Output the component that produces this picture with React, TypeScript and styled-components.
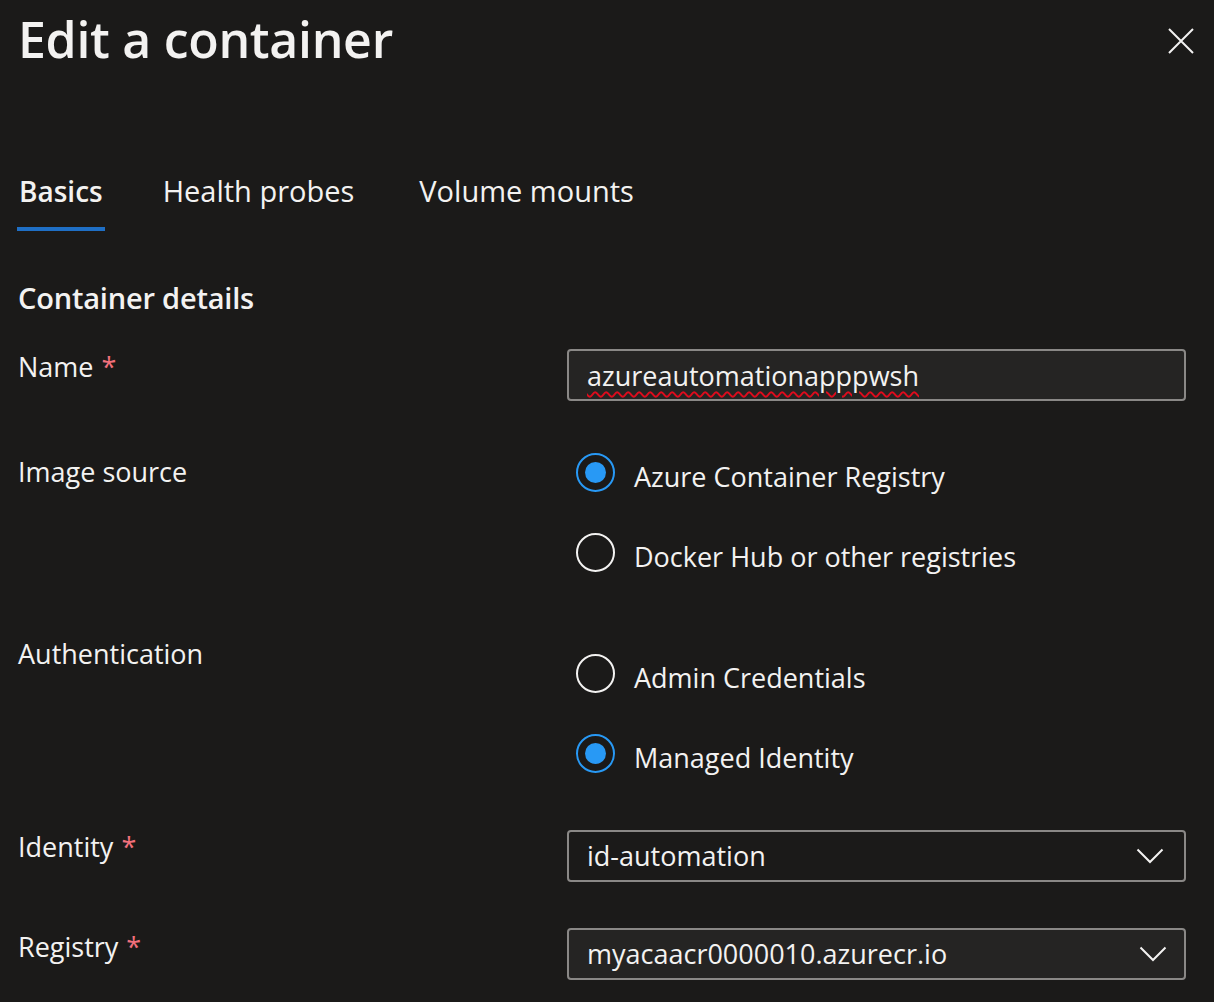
import React from 'react';
import styled, { createGlobalStyle } from 'styled-components';

const Global = createGlobalStyle`
  html, body { margin: 0; padding: 0; background: #1b1a19; }
  body {
    font-family: "Open Sans", "Noto Sans", "Liberation Sans", sans-serif;
    color: #f3f2f1;
  }
`;

const Page = styled.div`
  width: 1214px;
  height: 1002px;
  overflow: hidden;
  box-sizing: border-box;
  padding: 0 28px 0 18px;
  background: #1b1a19;
`;

const Header = styled.header`
  display: flex;
  justify-content: space-between;
  align-items: flex-start;
  padding-top: 7px;
`;

const Title = styled.h1`
  margin: 0;
  font-size: 50px;
  font-weight: 600;
  line-height: 64px;
  color: #f3f2f1;
  letter-spacing: -0.3px;
`;

const CloseButton = styled.button`
  display: flex;
  align-items: center;
  justify-content: center;
  margin: 21px -8px 0 0;
  padding: 0;
  width: 26px;
  height: 26px;
  border: none;
  background: transparent;
  color: #f3f2f1;
  cursor: pointer;
`;

const TabList = styled.nav`
  display: flex;
  gap: 56px;
  margin-top: 100px;
  margin-left: -1px;
`;

const Tab = styled.div<{ $active?: boolean }>`
  padding: 0 2px 16px;
  font-size: ${(p) => (p.$active ? 28 : 29)}px;
  line-height: 40px;
  font-weight: ${(p) => (p.$active ? 600 : 400)};
  border-bottom: 4px solid ${(p) => (p.$active ? '#1f6fc5' : 'transparent')};
  color: #f3f2f1;
  & + & + & {
    margin-left: 5px;
  }
`;

const SectionTitle = styled.h2`
  margin: 47px 0 0;
  font-size: 29px;
  line-height: 40px;
  font-weight: 600;
  letter-spacing: -0.2px;
`;

const FormRow = styled.div<{ $top: number }>`
  display: grid;
  grid-template-columns: 549px 619px;
  align-items: start;
  margin-top: ${(p) => p.$top}px;
`;

const Label = styled.div`
  font-size: 27px;
  line-height: 40px;
  color: #f3f2f1;
`;

const Required = styled.span`
  color: #f1707b;
  margin-left: 8px;
`;

const Field = styled.div<{ $offset: number; $tone?: 'raised' | 'flat' }>`
  box-sizing: border-box;
  height: 52px;
  margin-top: ${(p) => p.$offset}px;
  display: flex;
  align-items: center;
  justify-content: space-between;
  padding: 0 18px 0 18px;
  border: 2px solid #8a8886;
  border-radius: 4px;
  background: ${(p) => (p.$tone === 'raised' ? '#252423' : '#1b1a19')};
  font-size: 27px;
  line-height: 40px;
  color: #f3f2f1;
`;

const Misspelled = styled.span`
  text-decoration: underline wavy #e00b1c;
  text-decoration-thickness: 2px;
  text-underline-offset: 5px;
  padding-top: 2px;
`;

const Chevron = styled.svg<{ $shift?: number }>`
  width: 28px;
  height: 16px;
  margin-right: ${(p) => 2 - (p.$shift || 0)}px;
  flex: none;
`;

const RadioGroup = styled.div<{ $offset: number }>`
  display: flex;
  flex-direction: column;
  gap: 36px;
  margin-top: ${(p) => p.$offset}px;
`;

const RadioOption = styled.label`
  display: flex;
  align-items: flex-start;
  gap: 19px;
  margin-left: 9px;
  cursor: pointer;
`;

const RadioCircle = styled.span<{ $checked?: boolean }>`
  box-sizing: border-box;
  flex: none;
  width: 39px;
  height: 39px;
  border-radius: 50%;
  border: 2px solid ${(p) => (p.$checked ? '#2899f5' : '#f3f2f1')};
  display: flex;
  align-items: center;
  justify-content: center;
  &::after {
    content: '';
    display: ${(p) => (p.$checked ? 'block' : 'none')};
    width: 21px;
    height: 21px;
    border-radius: 50%;
    background: #2899f5;
  }
`;

const RadioText = styled.span`
  margin-top: 4px;
  font-size: 27px;
  line-height: 40px;
  color: #f3f2f1;
`;

const ChevronIcon = ({ shift }: { shift?: number }) => (
  <Chevron $shift={shift} viewBox="0 0 28 16" fill="none">
    <path d="M1.5 1.5 L14 14 L26.5 1.5" stroke="#f3f2f1" strokeWidth="2" />
  </Chevron>
);

const Radio = ({ checked, children }: { checked?: boolean; children: React.ReactNode }) => (
  <RadioOption>
    <RadioCircle $checked={checked} />
    <RadioText>{children}</RadioText>
  </RadioOption>
);

export default function App() {
  return (
    <Page>
      <Global />
      <Header>
        <Title>Edit a container</Title>
        <CloseButton aria-label="Close">
          <svg width="26" height="26" viewBox="0 0 26 26">
            <path d="M1 1 L25 25 M25 1 L1 25" stroke="#f3f2f1" strokeWidth="2" />
          </svg>
        </CloseButton>
      </Header>

      <TabList>
        <Tab $active>Basics</Tab>
        <Tab>Health probes</Tab>
        <Tab>Volume mounts</Tab>
      </TabList>

      <SectionTitle>Container details</SectionTitle>

      <FormRow $top={29}>
        <Label>
          Name<Required>*</Required>
        </Label>
        <Field $offset={2} $tone="raised">
          <Misspelled>azureautomationapppwsh</Misspelled>
        </Field>
      </FormRow>

      <FormRow $top={51}>
        <Label>Image source</Label>
        <RadioGroup $offset={1}>
          <Radio checked>Azure Container Registry</Radio>
          <Radio>Docker Hub or other registries</Radio>
        </RadioGroup>
      </FormRow>

      <FormRow $top={57}>
        <Label>Authentication</Label>
        <RadioGroup $offset={20}>
          <Radio>Admin Credentials</Radio>
          <Radio checked>Managed Identity</Radio>
        </RadioGroup>
      </FormRow>

      <FormRow $top={49}>
        <Label>
          Identity<Required>*</Required>
        </Label>
        <Field $offset={3}>
          <span>id-automation</span>
          <ChevronIcon />
        </Field>
      </FormRow>

      <FormRow $top={45}>
        <Label>
          Registry<Required>*</Required>
        </Label>
        <Field $offset={1} $tone="raised">
          <span>myacaacr0000010.azurecr.io</span>
          <ChevronIcon shift={3} />
        </Field>
      </FormRow>
    </Page>
  );
}
